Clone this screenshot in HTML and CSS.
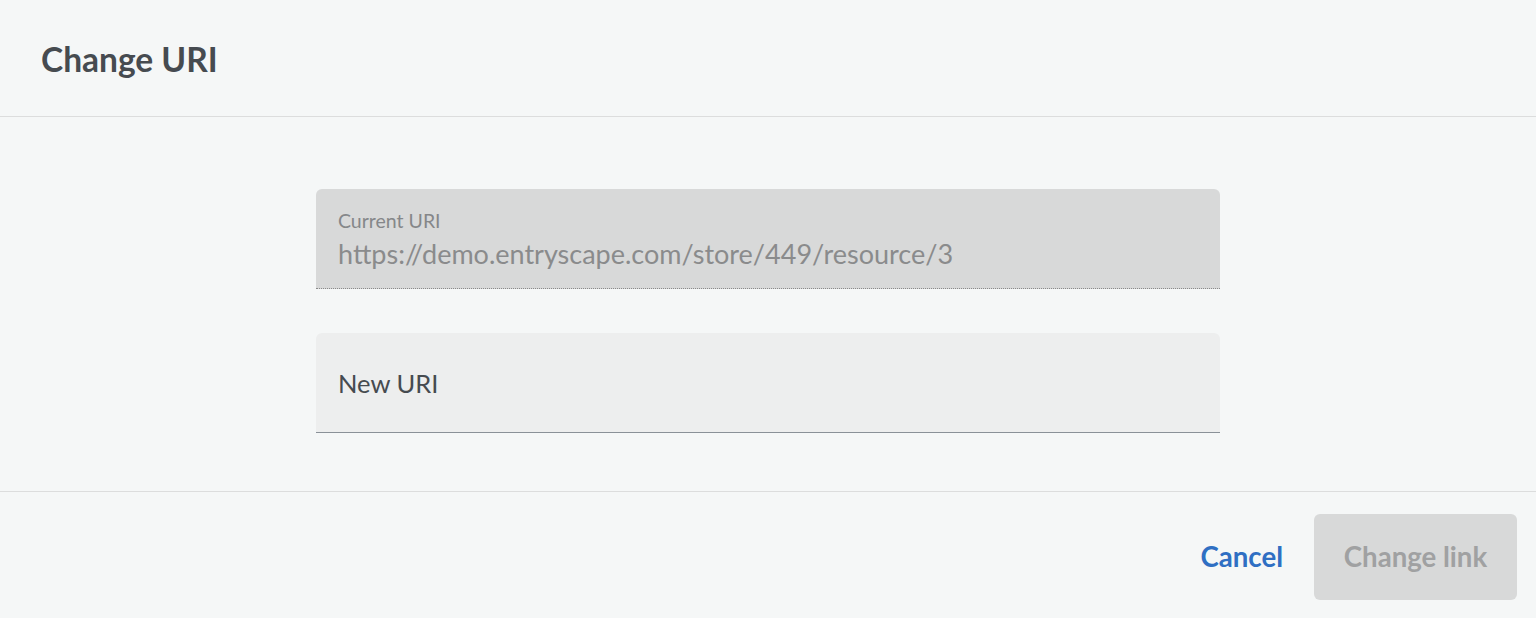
FILE: index.html
```html
<!DOCTYPE html>
<html lang="en">
<head>
<meta charset="utf-8">
<title>Change URI</title>
<link rel="stylesheet" href="styles.css">
</head>
<body>
<div class="dialog">
  <header class="dialog-header">
    <h1 class="dialog-title">Change URI</h1>
  </header>
  <main class="dialog-body">
    <div class="field field-disabled">
      <label class="field-label-small">Current URI</label>
      <div class="field-value">https://demo.entryscape.com/store/449/resource/3</div>
    </div>
    <div class="field field-input">
      <label class="field-label-big">New URI</label>
    </div>
  </main>
  <footer class="dialog-footer">
    <button class="btn-text">Cancel</button>
    <button class="btn-primary" disabled>Change link</button>
  </footer>
</div>
</body>
</html>
```
FILE: styles.css
```css
html, body {
  margin: 0;
  padding: 0;
  background: #f5f7f7;
}
body {
  font-family: Lato, "Open Sans", sans-serif;
  color: #464b50;
}
.dialog {
  height: 618px;
  display: flex;
  flex-direction: column;
}
.dialog-header {
  height: 117px;
  flex: none;
  border-bottom: 1px solid #dcdddd;
  display: flex;
  align-items: center;
  padding-left: 41px;
  box-sizing: border-box;
}
.dialog-title {
  margin: 0;
  font-size: 33.5px;
  font-weight: 700;
  color: #464b50;
  position: relative;
  top: 1px;
}
.dialog-body {
  flex: none;
  display: flex;
  flex-direction: column;
  align-items: center;
  padding-top: 72px;
  gap: 44px;
  height: 375px;
  box-sizing: border-box;
  border-bottom: 1px solid #dcdddd;
}
.field {
  width: 904px;
  height: 100px;
  box-sizing: border-box;
  border-radius: 6px 6px 0 0;
  display: flex;
  flex-direction: column;
  justify-content: center;
  padding-left: 22px;
}
.field-disabled {
  background: #d8d9d9;
  border-bottom: 1px dotted #8a8a8a;
  padding-top: 4px;
}
.field-input {
  background: #edeeee;
  border-bottom: 1px solid #8a9198;
}
.field-label-small {
  font-size: 19.5px;
  color: #858789;
  line-height: 22px;
}
.field-value {
  font-size: 27px;
  color: #8a8b8c;
  line-height: 36px;
  margin-top: 4px;
}
.field-label-big {
  font-size: 25.5px;
  color: #464b50;
  line-height: 36px;
}
.dialog-footer {
  flex: 1;
  display: flex;
  align-items: center;
  justify-content: flex-end;
  padding: 3px 19px 0 0;
  gap: 31px;
}
.btn-text, .btn-primary {
  font-family: Lato, "Open Sans", sans-serif;
  font-weight: 700;
  font-size: 27.6px;
  border: none;
  cursor: pointer;
}
.btn-text {
  background: none;
  color: #2f6fc3;
  padding: 0;
}
.btn-primary {
  background: #d8d9d9;
  color: #a0a1a2;
  width: 203px;
  height: 86px;
  border-radius: 6px;
  padding: 0;
}
```
